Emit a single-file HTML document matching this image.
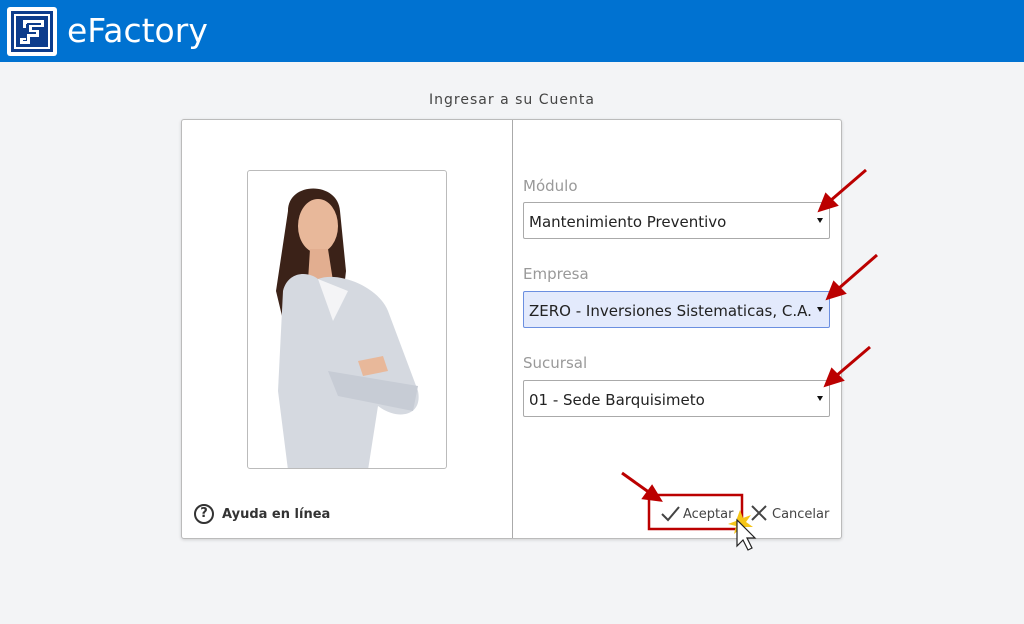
<!DOCTYPE html>
<html><head><meta charset="utf-8"><style>
*{margin:0;padding:0;box-sizing:border-box}
body{width:1024px;height:624px;background:#f3f4f6;font-family:"Liberation Sans","DejaVu Sans",sans-serif;position:relative;overflow:hidden}
.hdr{position:absolute;left:0;top:0;width:1024px;height:62px;background:#0072d1}
.logo{position:absolute;left:7px;top:7px;width:50px;height:49px;background:#fff;border-radius:3px}
.logo .in{position:absolute;left:4px;top:4px;width:42px;height:41px;background:#0d3c8c}
.title{position:absolute;left:67px;top:11px;color:#fff;font-size:33px;font-family:"DejaVu Sans",sans-serif}
.cap{position:absolute;left:0;width:1024px;top:92px;text-align:center;font-size:14px;color:#444;font-family:"DejaVu Sans",sans-serif;letter-spacing:1px}
.card{position:absolute;left:181px;top:119px;width:661px;height:420px;background:#fff;border:1px solid #bbb;border-radius:3px;box-shadow:0 1px 3px rgba(0,0,0,.15)}
.div{position:absolute;left:330px;top:0;width:1px;height:418px;background:#aaa}
.photo{position:absolute;left:65px;top:50px;width:200px;height:299px;border:1px solid #bbb;border-radius:3px;overflow:hidden;background:#fff}
.lbl{position:absolute;left:341px;font-size:15px;color:#999;font-family:"DejaVu Sans",sans-serif}
.sel{position:absolute;left:341px;width:307px;height:37px;border:1px solid #aaa;border-radius:2px;font-size:15px;color:#222;padding:10px 5px;font-family:"DejaVu Sans",sans-serif;background:#fff;white-space:nowrap;overflow:hidden}
.sel:after{content:"";position:absolute;right:6px;top:15px;border-left:3px solid transparent;border-right:3px solid transparent;border-top:5px solid #111}
.help{position:absolute;left:12px;top:384px;font-size:13px;font-weight:bold;color:#333;font-family:"DejaVu Sans",sans-serif;display:flex;align-items:center;gap:8px}
.help .q{width:20px;height:20px;border:2px solid #333;border-radius:50%;text-align:center;font-size:13px;line-height:16px}
.btn{position:absolute;font-size:13px;color:#444;font-family:"DejaVu Sans",sans-serif}
svg.ov{position:absolute;left:0;top:0}
</style></head><body>
<div class="hdr"><div class="logo"><div class="in">
<svg width="42" height="41" viewBox="0 0 42 41"><path d="M4 4h34v33H4z" fill="none" stroke="#fff" stroke-width="2"/><path d="M12 9h21v7H21v3h7v7h-9v7H9v-6h6V17h-3z" fill="#fff"/><path d="M16 12h14v2H18v7h7v2h-9v7h-4v-1h3V13h1z" fill="#0d3c8c"/></svg>
</div></div><div class="title">eFactory</div></div>
<div class="cap">Ingresar a su Cuenta</div>
<div class="card">
<div class="photo"><svg width="200" height="299" viewBox="0 0 200 299">
<path d="M40 40 C40 10 90 10 92 40 L98 100 L90 170 L40 170 L28 120 Z" fill="#3b2218"/>
<ellipse cx="70" cy="55" rx="20" ry="27" fill="#e8b89a"/>
<path d="M62 78 L80 78 L85 110 L60 110Z" fill="#e2ae90"/>
<path d="M35 120 C40 100 60 100 70 108 C90 100 130 115 140 140 L170 220 C175 245 150 250 130 235 L120 299 L40 299 L30 220 Z" fill="#d5d9e0"/>
<path d="M70 108 L85 150 L100 120 Z" fill="#f4f4f6"/>
<path d="M80 200 L170 215 L165 240 L90 225Z" fill="#c7ccd5"/>
<path d="M110 190 L135 185 L140 200 L115 205Z" fill="#e8b89a"/>
</svg></div>
<div class="div"></div>
<div class="lbl" style="top:57px">Módulo</div>
<div class="sel" style="top:82px">Mantenimiento Preventivo</div>
<div class="lbl" style="top:145px">Empresa</div>
<div class="sel" style="top:171px;background:#e3eafc;border-color:#6b8fe0">ZERO - Inversiones Sistematicas, C.A.</div>
<div class="lbl" style="top:234px">Sucursal</div>
<div class="sel" style="top:260px">01 - Sede Barquisimeto</div>
<div class="help"><div class="q">?</div>Ayuda en línea</div>
<div class="btn" style="left:501px;top:387px">Aceptar</div>
<div class="btn" style="left:590px;top:387px">Cancelar</div>
</div>
<svg class="ov" width="1024" height="624">
<path d="M662 514l6 6 11-13" stroke="#444" stroke-width="2" fill="none"/>
<path d="M752 506l14 14M766 506l-14 14" stroke="#444" stroke-width="2"/>
<rect x="649" y="495" width="93" height="34" fill="none" stroke="#b00" stroke-width="2.5"/>
<g stroke="#b00" stroke-width="3" fill="#b00">
<line x1="866" y1="170" x2="830" y2="201"/><path d="M820 210 L826 195 L836 205Z"/>
<line x1="877" y1="255" x2="838" y2="289"/><path d="M828 298 L834 283 L844 293Z"/>
<line x1="870" y1="347" x2="836" y2="376"/><path d="M826 385 L832 370 L842 380Z"/>
<line x1="622" y1="473" x2="650" y2="493"/><path d="M660 500 L644 498 L652 487Z"/>
</g>
<path d="M740 510l3 8 8-3-5 7 7 5-8 0 0 8-5-6-6 5 2-8-8-2 8-3z" fill="#f5c518"/>
<path d="M737 520 L737 546 L743 540 L748 550 L752 548 L747 538 L755 538 Z" fill="#fff" stroke="#222" stroke-width="1.2"/>
</svg>
</body></html>
